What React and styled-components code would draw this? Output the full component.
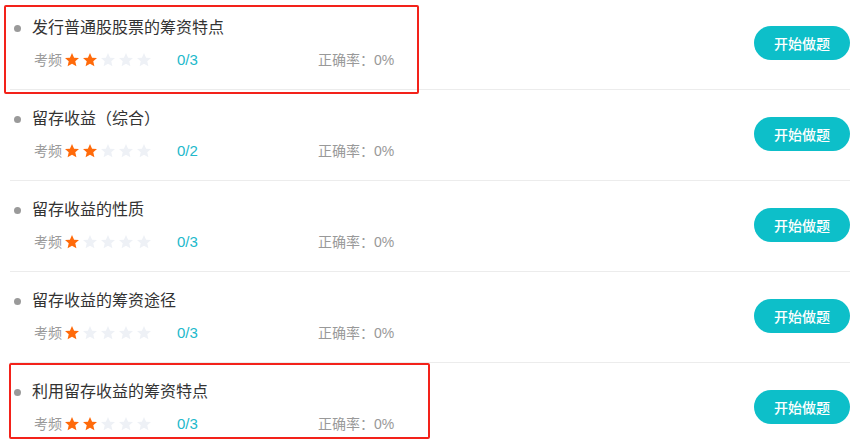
import React from 'react'
import styled, { createGlobalStyle } from 'styled-components'

const GlobalStyle = createGlobalStyle`
  body {
    margin: 0;
    background: #fff;
    font-family: "Liberation Sans", "Noto Sans CJK SC", sans-serif;
  }
`

const items = [
  { title: '发行普通股股票的筹资特点', level: 2, count: '0/3', mark: { l: -6, t: 6, w: 415, h: 89 } },
  { title: '留存收益（综合）', level: 2, count: '0/2' },
  { title: '留存收益的性质', level: 1, count: '0/3' },
  { title: '留存收益的筹资途径', level: 1, count: '0/3' },
  { title: '利用留存收益的筹资特点', level: 2, count: '0/3', mark: { l: -1, t: 0, w: 421, h: 76 } },
]

function Star({ on }) {
  return (
    <svg width="16" height="16" viewBox="0 0 24 24">
      <path
        d="M12 1.5l3.1 7 7.4.6-5.6 4.9 1.7 7.4L12 17.5l-6.6 3.9 1.7-7.4L1.5 9.1l7.4-.6z"
        fill={on ? '#ff6a0a' : '#eef1f6'}
      />
    </svg>
  )
}

function App() {
  return (
    <>
      <GlobalStyle />
      <List>
        {items.map((it, i) => (
          <Row key={i} $last={i === items.length - 1}>
            {it.mark && <Mark $m={it.mark} />}
            <Info>
              <Title>
                <Dot />
                {it.title}
              </Title>
              <Meta>
                <Label>考频</Label>
                <Stars>
                  {[1, 2, 3, 4, 5].map((n) => (
                    <Star key={n} on={n <= it.level} />
                  ))}
                </Stars>
                <Count>{it.count}</Count>
                <Rate>正确率：0%</Rate>
              </Meta>
            </Info>
            <StartButton>开始做题</StartButton>
          </Row>
        ))}
      </List>
    </>
  )
}

const List = styled.div`
  width: 840px;
  margin: -1px 0 0 10px;
`

const Row = styled.div`
  position: relative;
  height: 90px;
  display: flex;
  align-items: center;
  justify-content: space-between;
  border-bottom: 1px solid ${(p) => (p.$last ? 'transparent' : '#ececec')};
`

const Mark = styled.div`
  position: absolute;
  left: ${(p) => p.$m.l}px;
  top: ${(p) => p.$m.t}px;
  width: ${(p) => p.$m.w}px;
  height: ${(p) => p.$m.h}px;
  border: 2.5px solid #f3221a;
  border-radius: 2px;
  box-sizing: border-box;
  pointer-events: none;
`

const Info = styled.div`
  display: flex;
  flex-direction: column;
  gap: 11px;
  margin-top: -1px;
`

const Title = styled.div`
  display: flex;
  align-items: center;
  font-size: 16px;
  line-height: 22px;
  color: #333;
`

const Dot = styled.span`
  width: 7px;
  height: 7px;
  border-radius: 50%;
  background: #9a9a9a;
  margin: 0 11px 0 4px;
`

const Meta = styled.div`
  display: flex;
  align-items: center;
  padding-left: 24px;
  font-size: 14px;
  line-height: 20px;
  color: #999;
`

const Label = styled.span`
  width: 30px;
`

const Stars = styled.span`
  display: flex;
  gap: 2px;
  width: 113px;
  svg {
    display: block;
  }
`

const Count = styled.span`
  width: 141px;
  font-size: 15px;
  color: #22b9cb;
`

const Rate = styled.span`
  font-size: 14px;
  color: #999;
`

const StartButton = styled.button`
  width: 96px;
  height: 34px;
  margin-top: -2px;
  border: none;
  border-radius: 17px;
  background: #0dbfc9;
  color: #fff;
  font-family: inherit;
  font-size: 14px;
  font-weight: 500;
  cursor: pointer;
`

export default App
